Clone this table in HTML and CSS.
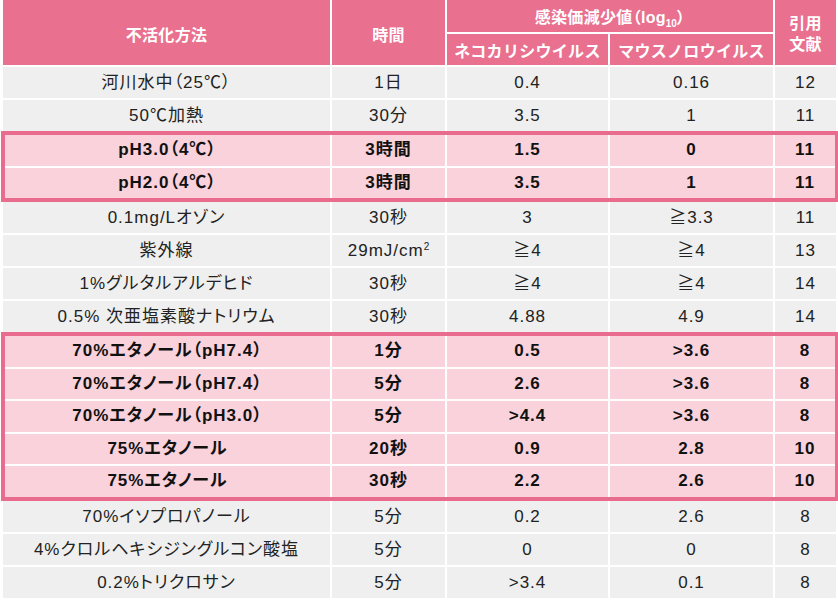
FILE: index.html
```html
<!DOCTYPE html>
<html lang="ja">
<head>
<meta charset="utf-8">
<title>不活化方法</title>
<link rel="stylesheet" href="styles.css">
</head>
<body>
<div class="table">
  <div class="head">
    <div class="c span2"><span>不活化方法</span></div>
    <div class="c span2"><span>時間</span></div>
    <div class="c wide"><span>感染価減少値<span class="p">（</span>log<sub>10</sub><span class="p">）</span></span></div>
    <div class="c span2 ref"><span>引用<br>文献</span></div>
    <div class="c"><span>ネコカリシウイルス</span></div>
    <div class="c"><span>マウスノロウイルス</span></div>
  </div>

  <div class="row"><div class="c">河川水中（25℃）</div><div class="c">1日</div><div class="c">0.4</div><div class="c">0.16</div><div class="c">12</div></div>
  <div class="row"><div class="c">50℃加熱</div><div class="c">30分</div><div class="c">3.5</div><div class="c">1</div><div class="c">11</div></div>

  <div class="group">
    <div class="row"><div class="c">pH3.0（4℃）</div><div class="c">3時間</div><div class="c">1.5</div><div class="c">0</div><div class="c">11</div></div>
    <div class="row"><div class="c">pH2.0（4℃）</div><div class="c">3時間</div><div class="c">3.5</div><div class="c">1</div><div class="c">11</div></div>
  </div>

  <div class="row"><div class="c">0.1mg/Lオゾン</div><div class="c">30秒</div><div class="c">3</div><div class="c">≧3.3</div><div class="c">11</div></div>
  <div class="row"><div class="c">紫外線</div><div class="c">29mJ/cm<sup>2</sup></div><div class="c">≧4</div><div class="c">≧4</div><div class="c">13</div></div>
  <div class="row"><div class="c">1%グルタルアルデヒド</div><div class="c">30秒</div><div class="c">≧4</div><div class="c">≧4</div><div class="c">14</div></div>
  <div class="row"><div class="c">0.5% 次亜塩素酸ナトリウム</div><div class="c">30秒</div><div class="c">4.88</div><div class="c">4.9</div><div class="c">14</div></div>

  <div class="group">
    <div class="row"><div class="c">70%エタノール（pH7.4）</div><div class="c">1分</div><div class="c">0.5</div><div class="c">&gt;3.6</div><div class="c">8</div></div>
    <div class="row"><div class="c">70%エタノール（pH7.4）</div><div class="c">5分</div><div class="c">2.6</div><div class="c">&gt;3.6</div><div class="c">8</div></div>
    <div class="row"><div class="c">70%エタノール（pH3.0）</div><div class="c">5分</div><div class="c">&gt;4.4</div><div class="c">&gt;3.6</div><div class="c">8</div></div>
    <div class="row"><div class="c">75%エタノール</div><div class="c">20秒</div><div class="c">0.9</div><div class="c">2.8</div><div class="c">10</div></div>
    <div class="row"><div class="c">75%エタノール</div><div class="c">30秒</div><div class="c">2.2</div><div class="c">2.6</div><div class="c">10</div></div>
  </div>

  <div class="row"><div class="c">70%イソプロパノール</div><div class="c">5分</div><div class="c">0.2</div><div class="c">2.6</div><div class="c">8</div></div>
  <div class="row"><div class="c">4%クロルヘキシジングルコン酸塩</div><div class="c">5分</div><div class="c">0</div><div class="c">0</div><div class="c">8</div></div>
  <div class="row"><div class="c">0.2%トリクロサン</div><div class="c">5分</div><div class="c">&gt;3.4</div><div class="c">0.1</div><div class="c">8</div></div>
</div>
</body>
</html>
```

FILE: styles.css
```css
html, body {
  margin: 0;
  padding: 0;
  background: #ffffff;
}

body {
  font-family: "Liberation Sans", "Noto Sans CJK JP", sans-serif;
  color: #222222;
}

.table {
  display: flex;
  flex-direction: column;
  gap: 2px;
  width: 833px;
  padding-left: 3px;
}

.head {
  display: grid;
  grid-template-columns: 327px 113px 161px 163px 61px;
  grid-template-rows: 32px 31px;
  gap: 2px;
}

.head .c {
  background: #e9708f;
  color: #ffffff;
  font-weight: 700;
  font-size: 16px;
  letter-spacing: 0.3px;
  display: flex;
  align-items: center;
  justify-content: center;
  text-align: center;
}

.head .span2 {
  grid-row: span 2;
  padding-top: 3px;
}

.head .wide {
  grid-column: span 2;
}

.head .ref {
  line-height: 21px;
}

.head sub {
  font-size: 10px;
  vertical-align: -4px;
  line-height: 0;
  letter-spacing: 0;
}

.p {
  font-feature-settings: "palt";
  font-family: "Noto Sans CJK JP", sans-serif;
}

.row {
  display: grid;
  grid-template-columns: 327px 113px 161px 163px 61px;
  column-gap: 2px;
  height: 31px;
}

.row .c {
  background: #eeefee;
  text-align: center;
  line-height: 31px;
  font-size: 17px;
  letter-spacing: 1px;
  white-space: nowrap;
  font-feature-settings: "palt";
}

.row sup {
  font-size: 10px;
  vertical-align: 6px;
  line-height: 0;
  letter-spacing: 0;
}

.group {
  display: flex;
  flex-direction: column;
  gap: 2px;
  margin: -2px -2px;
  border: 4px solid #e96b8d;
  border-right-width: 3px;
  background: #ffffff;
}

.group .row {
  grid-template-columns: 325px 113px 161px 163px 60px;
  height: 30.5px;
}

.group .c {
  background: #f9d2db;
  font-weight: 700;
  color: #111111;
  line-height: 30.5px;
}
```
